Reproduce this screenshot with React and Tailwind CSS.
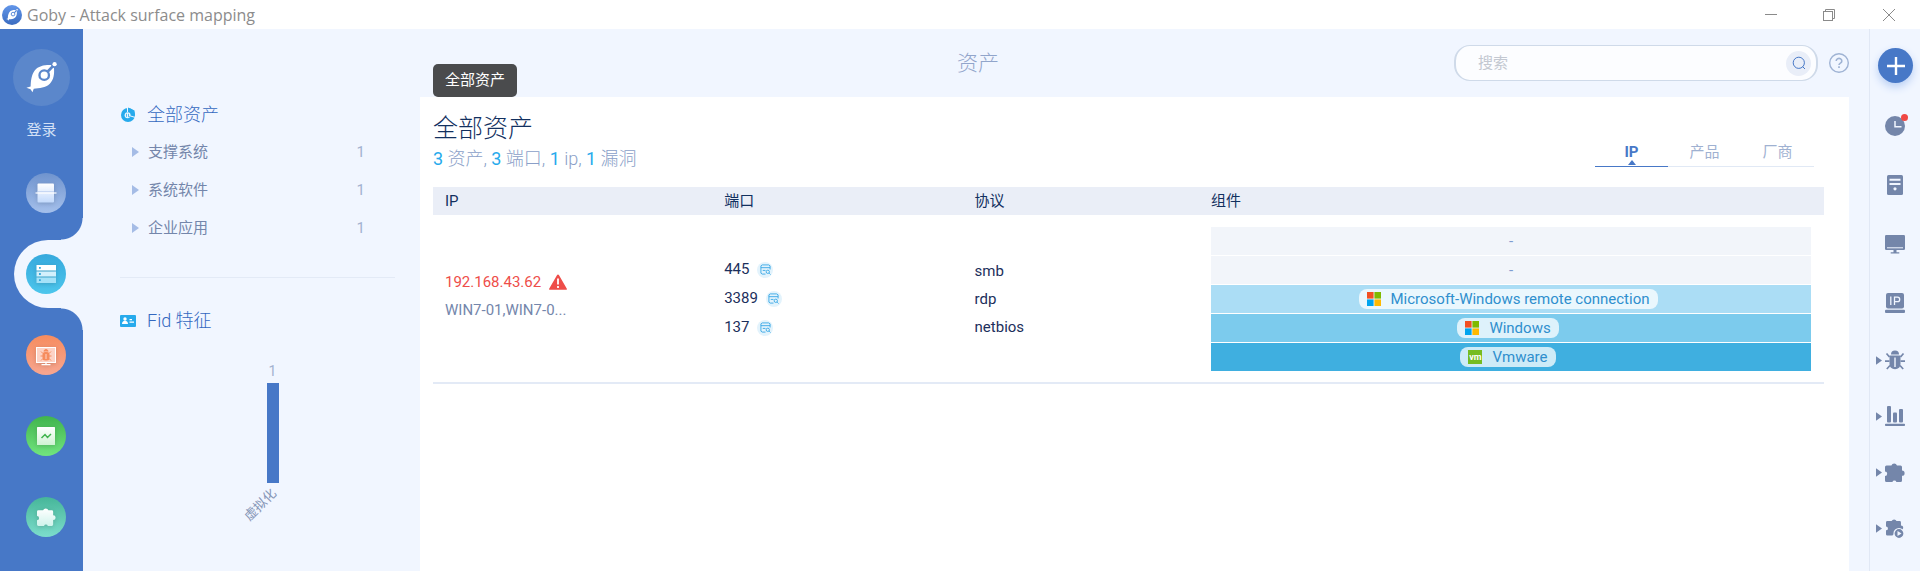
import React from "react";

const PUZZLE =
  "M1.5 3.5H6.4A3 3 0 0 1 12 3.5H15.5A1.5 1.5 0 0 1 17 5V8.6A2.6 2.6 0 0 1 17 13.8V18.5A1.5 1.5 0 0 1 15.5 20H11.4A2.1 2.1 0 0 0 7.4 20H1.5A1.5 1.5 0 0 1 0 18.5V14A2.1 2.1 0 0 0 0 9.6V5A1.5 1.5 0 0 1 1.5 3.5Z";

function Rocket({ className, hole }) {
  return (
    <svg viewBox="0 0 32 32" className={className} aria-hidden="true">
      <path
        d="M4.800 25.400C5 19 5.600 13.500 9 8.800 12.800 3.800 19 2.800 25.600 3L28.900 6.500C29.300 12.500 28.800 18 24.600 22.400 20 26.700 14 27 8 27.600L6.700 31.200 4.700 28 0.400 26.600Z"
        fill="#fff"
      />
      <path d="M21.500 10.800L28.800 3.200" stroke={hole} strokeWidth="2.800" />
      <circle cx="18.800" cy="13.600" r="4.900" fill="#fff" stroke={hole} strokeWidth="2.400" />
      <circle cx="29.300" cy="2.500" r="2.900" fill={hole} />
      <circle cx="29.500" cy="2.300" r="2.200" fill="#fff" />
    </svg>
  );
}

function Caret({ className }) {
  return (
    <svg viewBox="0 0 7 10" className={className} aria-hidden="true">
      <path d="M0 0L7 5 0 10Z" fill="currentColor" />
    </svg>
  );
}

function Fade({ id, from, to }) {
  return (
    <linearGradient id={id} x1="0" y1="0" x2="0" y2="1">
      <stop offset="0" stopColor={from} />
      <stop offset="1" stopColor={to} />
    </linearGradient>
  );
}

const navItems = [
  {
    label: "扫描",
    tone: "from-[#7094ce] to-[#a5c0eb]",
    icon: (
      <>
        <Fade id="scan" from="#ffffff" to="#c3dafc" />
        <rect x="1.500" y="0.500" width="16.500" height="19" rx="1" fill="url(#scan)" />
        <path d="M1.500 8.800H18" stroke="#b9cdf0" strokeWidth="1" />
        <path d="M-0.500 10H20.500" stroke="#fff" strokeWidth="1.200" />
      </>
    ),
  },
  {
    label: "资产",
    active: true,
    tone: "from-[#36a9dd] to-[#4dc6ec]",
    icon: (
      <>
        <rect x="0.500" y="1" width="19.500" height="5.500" fill="#fff" />
        <rect x="0.500" y="7.500" width="19.500" height="5" fill="#d3f0fc" />
        <rect x="0.500" y="13.500" width="19.500" height="5.500" fill="#a5e2f8" />
        <path d="M3 3.800h1.800M3 10h1.800M3 16.200h1.800" stroke="#36a9dd" strokeWidth="1.800" />
      </>
    ),
  },
  {
    label: "漏洞",
    tone: "from-[#f68c5e] to-[#f7a690]",
    icon: (
      <>
        <rect x="0.500" y="2.500" width="19" height="15" fill="#fdd3c6" stroke="#fff" />
        <path d="M10 17.500V19.500M5.500 19.700H14.500" stroke="#fff" strokeWidth="1.300" />
        <rect x="6.500" y="7" width="7" height="8.500" rx="2.500" fill="#f68c5e" />
        <path d="M8 6.500a2 2 0 0 1 4 0M5 6.500L7 8.500M15 6.500L13 8.500M4.500 11H15.500M5 15.500L7 13.500M15 15.500L13 13.500" stroke="#f68c5e" fill="#f68c5e" />
        <path d="M10 9V14" stroke="#fdd3c6" />
      </>
    ),
  },
  {
    label: "报告",
    tone: "from-[#40b44d] to-[#71e57e]",
    icon: (
      <>
        <Fade id="report" from="#ffffff" to="#cff3d2" />
        <rect x="1" y="1" width="18" height="18" rx="0.500" fill="url(#report)" />
        <path d="M5.500 12L9 8.500 11.500 11.500 15 8" stroke="#40b44d" strokeWidth="1.500" fill="none" />
      </>
    ),
  },
  {
    label: "插件",
    tone: "from-[#45b699] to-[#7cddcc]",
    icon: (
      <>
        <Fade id="plugin" from="#ffffff" to="#cff3eb" />
        <path d={PUZZLE} fill="url(#plugin)" transform="translate(1 0) scale(.95)" />
      </>
    ),
  },
];

const tools = [
  {
    label: "历史",
    badge: true,
    icon: (
      <>
        <circle cx="10" cy="10" r="10" />
        <path d="M10 5V10.700H16.500" stroke="#f1f6ff" strokeWidth="1.500" fill="none" />
      </>
    ),
  },
  {
    label: "主机",
    icon: (
      <>
        <rect x="2" y="0" width="16" height="20" rx="1.500" />
        <path d="M4.500 4.800H15.500M4.500 9H15.500" stroke="#f1f6ff" strokeWidth="2" />
        <circle cx="10" cy="13.800" r="1.600" fill="#f1f6ff" />
      </>
    ),
  },
  {
    label: "显示",
    icon: (
      <>
        <rect x="0" y="1" width="20" height="15" rx="1.200" />
        <path d="M2 13.800H18" stroke="#f1f6ff" />
        <path d="M8.500 16H11.500V18.200H14.300V19.600H5.700V18.200H8.500Z" />
      </>
    ),
  },
  {
    label: "IP",
    icon: (
      <>
        <rect x="1" y="0" width="18" height="15.500" rx="2" />
        <rect x="0" y="16.800" width="20" height="3.200" rx="1" />
        <path d="M5.800 3.500V12M9.500 12V4.200H12.500a2.200 2.200 0 0 1 0 4.400H9.500" stroke="#f1f6ff" strokeWidth="1.300" fill="none" />
      </>
    ),
  },
  {
    label: "漏洞",
    expandable: true,
    icon: (
      <>
        <path d="M6 4.500A4 4 0 0 1 14 4.500Z" />
        <path d="M4.500 5.500H15.500V14C15.500 17 13.200 19.200 10 19.200S4.500 17 4.500 14Z" />
        <path d="M1.500 3.500L4.500 7M18.500 3.500L15.500 7M0 11.200H4.500M20 11.200H15.500M1.800 19L5 15.500M18.200 19L15 15.500" stroke="currentColor" strokeWidth="1.700" />
        <path d="M10 7.500V17" stroke="#f1f6ff" strokeWidth="1.400" />
      </>
    ),
  },
  {
    label: "统计",
    expandable: true,
    icon: (
      <>
        <rect x="2" y="0" width="4" height="16.500" rx="1" />
        <rect x="8" y="6.500" width="4" height="10" rx="1" />
        <rect x="14" y="3" width="4" height="13.500" rx="1" />
        <rect x="0" y="17.800" width="20" height="2.200" rx="0.800" />
      </>
    ),
  },
  { label: "插件", expandable: true, icon: <path d={PUZZLE} /> },
  {
    label: "运行插件",
    expandable: true,
    icon: (
      <>
        <path d={PUZZLE} transform="translate(1 0) scale(.88)" />
        <circle cx="14" cy="15.500" r="5" stroke="#f1f6ff" strokeWidth="1.200" />
        <path d="M12.500 13L16.500 15.500 12.500 18Z" fill="#f1f6ff" />
      </>
    ),
  },
];

const categories = [
  ["支撑系统", 1],
  ["系统软件", 1],
  ["企业应用", 1],
];

const summary = [
  ["3", " 资产, "],
  ["3", " 端口, "],
  ["1", " ip, "],
  ["1", " 漏洞"],
];

const layers = [
  { tone: "bg-[#f2f5fa]" },
  { tone: "bg-[#f2f5fa]" },
  { tone: "bg-[#abddf5]", name: "Microsoft-Windows remote connection", logo: "win" },
  { tone: "bg-[#7ccbed]", name: "Windows", logo: "win" },
  { tone: "bg-[#3fafe0]", name: "Vmware", logo: "vm" },
];

function TitleBar() {
  return (
    <header className="flex h-[29px] shrink-0 items-center bg-white pl-0.5">
      <span className="flex size-5 items-center justify-center rounded-full bg-linear-to-b from-[#6296ea] to-[#3b6cc0]">
        <Rocket className="size-3 overflow-visible" hole="#4d80d4" />
      </span>
      <h1 className="ml-[5px] font-['Open_Sans','Noto_Sans',sans-serif] text-base leading-7 text-[#8c8c8c]">
        Goby - Attack surface mapping
      </h1>
      <div className="ml-auto flex h-full text-[#8a8a8a]">
        <button aria-label="最小化" className="flex w-[58px] items-center justify-center">
          <svg viewBox="0 0 12 12" className="size-3"><path d="M0 5.500H12" stroke="currentColor" /></svg>
        </button>
        <button aria-label="还原" className="flex w-[58px] items-center justify-center">
          <svg viewBox="0 0 12 12" className="size-3" fill="none" stroke="currentColor">
            <rect x="0.500" y="2.500" width="9" height="9" />
            <path d="M2.500 2.500V0.500H11.500V9.500H9.500" />
          </svg>
        </button>
        <button aria-label="关闭" className="flex w-[62px] items-center justify-center">
          <svg viewBox="0 0 12 12" className="size-3"><path d="M0 0L12 12M12 0L0 12" stroke="currentColor" /></svg>
        </button>
      </div>
    </header>
  );
}

function NavButton({ item }) {
  return (
    <button
      aria-label={item.label}
      className={`flex size-10 items-center justify-center rounded-full bg-linear-to-b ${item.tone}`}
    >
      <svg viewBox="0 0 20 20" className="size-5 overflow-visible drop-shadow-sm">{item.icon}</svg>
    </button>
  );
}

function Sidebar() {
  return (
    <aside className="flex w-[83px] shrink-0 flex-col bg-[#4778c7]">
      <a href="#login" className="flex flex-col items-center pt-5 text-[15px] leading-6 text-[#d3e0f6]">
        <span className="flex size-[57px] items-center justify-center rounded-full bg-[#5b87cb]">
          <Rocket className="size-[31px] overflow-visible" hole="#5b87cb" />
        </span>
        <span className="mt-3">登录</span>
      </a>
      <nav className="mt-2.5 flex flex-col">
        {navItems.map((item) => (
          <div key={item.label} className="flex h-[81px] items-center">
            {item.active ? (
              <div className="relative ml-3.5 flex h-[68px] flex-1 items-center rounded-l-full bg-[#f1f6ff] pl-3">
                <span className="absolute -top-[22px] right-0 size-[22px] bg-[radial-gradient(circle_at_0_0,#4778c7_21px,#f1f6ff_22px)]" />
                <span className="absolute right-0 -bottom-[22px] size-[22px] bg-[radial-gradient(circle_at_0_100%,#4778c7_21px,#f1f6ff_22px)]" />
                <NavButton item={item} />
              </div>
            ) : (
              <div className="pl-[26px]">
                <NavButton item={item} />
              </div>
            )}
          </div>
        ))}
      </nav>
    </aside>
  );
}

function TopBar() {
  return (
    <div className="grid h-[68px] shrink-0 grid-cols-[1fr_auto_1fr] items-center">
      <h2 className="col-start-2 pl-1 text-[21px] leading-7 font-light text-[#91a5cb]">资产</h2>
      <div className="flex items-center justify-end gap-[11px] pr-5">
        <form className="flex h-9 w-[364px] items-center rounded-2xl border border-x-2 border-[#cfdae9] bg-[#fcfdff] pr-[5px] pl-[22px]">
          <input
            type="text"
            aria-label="搜索"
            placeholder="搜索"
            className="min-w-0 flex-1 bg-transparent text-[15px] text-[#1c2f5c] outline-none placeholder:text-[#c3c8d1]"
          />
          <button type="button" aria-label="搜索" className="flex size-[25px] items-center justify-center rounded-full bg-[#e9eef8]">
            <svg viewBox="0 0 14 14" className="size-3.5" fill="none" stroke="#4778c7">
              <circle cx="6.800" cy="6.800" r="5.600" />
              <path d="M10.600 10.600L13 13" />
            </svg>
          </button>
        </form>
        <button aria-label="帮助" className="size-5">
          <svg viewBox="0 0 20 20" className="size-5" fill="none" stroke="#9fb3d4" strokeWidth="1.400">
            <circle cx="10" cy="10" r="9.300" />
            <path d="M7.200 7.900a2.800 2.500 0 1 1 4.200 2.200c-1 .6-1.400 1-1.400 2" strokeWidth="1.600" />
            <path d="M10 13.300V15" strokeWidth="1.700" />
          </svg>
        </button>
      </div>
    </div>
  );
}

function FilterPanel() {
  return (
    <section className="w-[337px] shrink-0 pr-[25px] pl-[37px]">
      <h3 className="flex h-9 items-center gap-[11px] text-lg font-light text-[#3468bf]">
        <svg viewBox="0 0 16 16" className="size-4">
          <circle cx="8" cy="8" r="7" fill="#27aaec" />
          <path d="M7.500 0V5" stroke="#f1f6ff" />
          <path d="M8 0.500L8 4L11 6L15 8.500 14.500 3.500Z" fill="#27aaec" />
          <path d="M10.500 9L15.500 10.500" stroke="#f1f6ff" />
          <circle cx="7.600" cy="8.300" r="3" fill="#eaf6fe" />
          <path d="M6.500 6.800V9.800M8.500 6.800V9.800H10" stroke="#27aaec" strokeWidth="0.800" fill="none" />
        </svg>
        全部资产
      </h3>
      <ul className="border-b border-[#e3eaf6] pb-[30px] text-[15px] text-[#7486ab]">
        {categories.map(([name, count]) => (
          <li key={name}>
            <button className="flex h-[38px] w-full items-center pr-[30px] pl-3">
              <Caret className="h-2.5 w-[7px] text-[#a5bce6]" />
              <span className="ml-[9px]">{name}</span>
              <span className="ml-auto text-[#a3b2d0]">{count}</span>
            </button>
          </li>
        ))}
      </ul>
      <h3 className="mt-[25px] flex h-9 items-center gap-[11px] text-lg font-light text-[#3468bf]">
        <svg viewBox="0 0 16 16" className="size-4">
          <rect x="0" y="2" width="16" height="12" rx="1" fill="#27aaec" />
          <circle cx="5" cy="6" r="1.700" fill="#fff" />
          <path d="M2 11C2 8.500 3.500 7.800 5 7.800S8 8.500 8 11ZM9.500 6H12V7.200H9.500ZM9.500 8.500H14V9.700H9.500Z" fill="#fff" />
        </svg>
        Fid 特征
      </h3>
      <figure className="mt-5 flex flex-col items-center pl-[30px]">
        <span className="text-sm leading-6 text-[#a3b2d0]">1</span>
        <span className="h-[100px] w-3 bg-[#4778c7]" />
        <figcaption className="mt-3 mr-6 -rotate-45 text-[13px] leading-5 text-[#8595b6]">虚拟化</figcaption>
      </figure>
    </section>
  );
}

function Tabs() {
  return (
    <div role="tablist" className="mr-2.5 mb-1 flex text-[15px] text-[#9fb1d1]">
      <button role="tab" aria-selected="true" className="relative h-8 w-[73px] border-b border-[#4778c7] pt-1 font-bold text-[#4778c7]">
        IP
        <svg viewBox="0 0 8 5" className="absolute bottom-px left-1/2 h-[5px] w-2 -translate-x-1/2">
          <path d="M4 0L8 5H0Z" fill="currentColor" />
        </svg>
      </button>
      <button role="tab" aria-selected="false" className="h-8 w-[73px] border-b border-[#e1e9f5] pt-1">产品</button>
      <button role="tab" aria-selected="false" className="h-8 w-[73px] border-b border-[#e1e9f5] pt-1">厂商</button>
    </div>
  );
}

function Logo({ kind }) {
  if (kind === "vm") {
    return (
      <span className="flex size-3.5 items-center justify-center bg-[#76bc21] text-[9px] leading-none font-bold text-white">vm</span>
    );
  }
  return (
    <svg viewBox="0 0 14 14" className="size-3.5" aria-hidden="true">
      <path fill="#f25022" d="M0 0h6.600v6.600H0z" />
      <path fill="#7fba00" d="M7.400 0H14v6.600H7.400z" />
      <path fill="#00a4ef" d="M0 7.400h6.600V14H0z" />
      <path fill="#ffb900" d="M7.400 7.400H14V14H7.400z" />
    </svg>
  );
}

function PortLink({ port }) {
  return (
    <li className="flex h-[29px] items-center gap-2">
      {port}
      <button aria-label={`查看 ${port}`} className="flex size-4 items-center justify-center rounded-full bg-[#e3f3fc]">
        <svg viewBox="0 0 12 12" className="size-[11px]" fill="none" stroke="#3aa9e6">
          <path d="M6 11H2.500L1 10V2L2.500 1H9.500L11 2V6M1 4H11M3 7H6" />
          <circle cx="8.500" cy="8.500" r="1.800" />
          <path d="M10 10L11.500 11.500" />
        </svg>
      </button>
    </li>
  );
}

function AssetTable() {
  return (
    <table className="mt-4 w-full table-fixed border-b-2 border-[#e3eaf6] text-left text-[15px] text-[#1c2f5c]">
      <thead className="bg-[#eaeef7] text-[#12305f]">
        <tr className="h-7">
          <th className="w-[20%] pl-3 font-normal">IP</th>
          <th className="w-[18%] pl-[13px] font-normal">端口</th>
          <th className="w-[17%] pl-[13px] font-normal">协议</th>
          <th className="pl-[13px] font-normal">组件</th>
        </tr>
      </thead>
      <tbody>
        <tr>
          <td className="pb-1.5 pl-3 leading-7">
            <a href="#host" className="flex items-center gap-2 text-[#ee4d49]">
              192.168.43.62
              <svg viewBox="0 0 18 16" className="h-4 w-[18px]">
                <path d="M9 0.500a1 1 0 0 1 .9 .5L17.700 14.500a.9 .9 0 0 1-.8 1.300H1.100a.9 .9 0 0 1-.8-1.300L8.100 1A1 1 0 0 1 9 0.500Z" fill="#ee4d49" />
                <path d="M9 4.500V10.500M9 12V14" stroke="#fff" strokeWidth="1.800" />
              </svg>
            </a>
            <div className="text-[#7486ab]">WIN7-01,WIN7-0...</div>
          </td>
          <td className="pl-[13px]">
            <ul>
              <PortLink port="445" />
              <PortLink port="3389" />
              <PortLink port="137" />
            </ul>
          </td>
          <td className="pl-[13px] leading-7">
            <ul>
              <li>smb</li>
              <li>rdp</li>
              <li>netbios</li>
            </ul>
          </td>
          <td className="px-[13px] pt-3 pb-[11px]">
            <ul className="flex flex-col gap-px text-[#2f8fce]">
              {layers.map((layer, i) => (
                <li key={i} className={`flex h-7 items-center justify-center ${layer.tone}`}>
                  {layer.name ? (
                    <span className="mr-1.5 flex h-5 items-center gap-2.5 rounded-lg bg-white/75 px-2">
                      <Logo kind={layer.logo} />
                      {layer.name}
                    </span>
                  ) : (
                    <span className="text-[#7f9ccf]">-</span>
                  )}
                </li>
              ))}
            </ul>
          </td>
        </tr>
      </tbody>
    </table>
  );
}

function AssetPanel() {
  return (
    <section className="relative mr-5 min-w-0 flex-1 bg-white pr-[25px] pl-[13px]">
      <div role="tooltip" className="absolute bottom-full left-[13px] flex h-[33px] items-center rounded-[5px] bg-[#4a4b4d] px-3 text-[15px] text-white">
        全部资产
      </div>
      <div className="flex h-[74px] items-end justify-between">
        <div>
          <h3 className="text-[25px] leading-8 font-light text-[#12305f]">全部资产</h3>
          <p className="mt-0.5 text-lg leading-6 text-[#8a9fc8]">
            {summary.map(([n, unit], i) => (
              <React.Fragment key={i}>
                <span className="text-[#27aaec]">{n}</span>
                <span className="font-light">{unit}</span>
              </React.Fragment>
            ))}
          </p>
        </div>
        <Tabs />
      </div>
      <AssetTable />
    </section>
  );
}

function ToolRail() {
  return (
    <aside className="flex w-[51px] shrink-0 flex-col border-l border-[#e1e8f5] text-[#7486aa]">
      <button aria-label="新建扫描" className="mt-[19px] mb-[13px] ml-2 flex size-[35px] shrink-0 items-center justify-center rounded-full bg-[#4778c7] shadow-[0_4px_8px_#b9cff4]">
        <svg viewBox="0 0 18 18" className="size-[18px]">
          <path d="M9 0V18M0 9H18" stroke="#fff" strokeWidth="2.400" />
        </svg>
      </button>
      {tools.map((tool) => (
        <button
          key={tool.label}
          aria-label={tool.label}
          className={`flex shrink-0 items-center pl-[6px] ${tool.expandable ? "h-14" : "h-[59px]"}`}
        >
          <span className="w-[9px]">{tool.expandable && <Caret className="h-[9px] w-1.5" />}</span>
          <span className="relative">
            <svg viewBox="0 0 20 20" className="size-5 overflow-visible" fill="currentColor">{tool.icon}</svg>
            {tool.badge && <span className="absolute -top-0.5 -right-[3px] size-[7px] rounded-full bg-[#f04844]" />}
          </span>
        </button>
      ))}
    </aside>
  );
}

export default function App() {
  return (
    <div className="flex h-screen flex-col overflow-hidden bg-[#f1f6ff] font-['Roboto','Noto_Sans_CJK_SC',sans-serif]">
      <TitleBar />
      <div className="flex min-h-0 flex-1">
        <Sidebar />
        <main className="flex min-w-0 flex-1 flex-col">
          <TopBar />
          <div className="flex min-h-0 flex-1">
            <FilterPanel />
            <AssetPanel />
          </div>
        </main>
        <ToolRail />
      </div>
    </div>
  );
}
